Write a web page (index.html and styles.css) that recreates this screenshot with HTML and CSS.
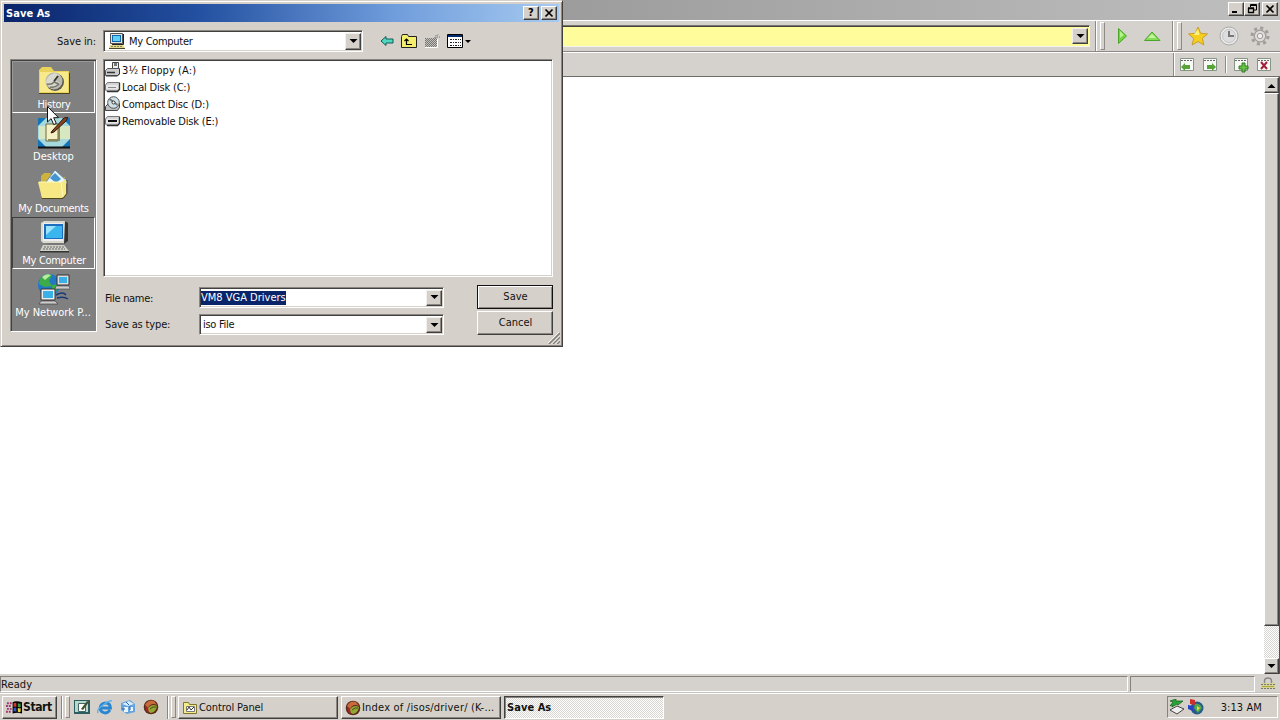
FILE: index.html
```html
<!DOCTYPE html>
<html lang="en">
<head>
  <meta charset="UTF-8">
  <title>Save As</title>
  <link rel="stylesheet" href="styles.css">
</head>
<body>

  <svg class="defs">
    <symbol id="i-pc" viewBox="0 0 32 32">
      <path d="M3 2l3-2h21l2 2v18l-3 2H5l-2-2z" fill="#d8d8cc"/>
      <path d="M27 0l3 2v18l-4 3" fill="#333"/>
      <path d="M5 2h20v18H5z" fill="#eee"/>
      <path d="M6 3h19v15H6z" fill="#1c6fc0"/>
      <path d="M8 5h16v12H8z" fill="#3bb5ee"/>
      <path d="M8 5h10l-10 9z" fill="#9be4fa"/>
      <path d="M9 22h16v3H9z" fill="#777"/>
      <path d="M5 24h21l5 6H2z" fill="#d0d0c8"/>
      <path d="M6 26h20M5 28h22" stroke="#666" stroke-dasharray="2 1"/>
      <path d="M2 30h29v1.500H2z" fill="#333"/>
    </symbol>
    <symbol id="i-pc-small" viewBox="0 0 16 16">
      <path d="M1.500.500h12v10h-12z" fill="#e4e4dc" stroke="#555"/>
      <path d="M14.500 1v10.500H3" fill="none" stroke="#222"/>
      <path d="M3 2h9v7H3z" fill="#1268b0"/>
      <path d="M4 3h7v5H4z" fill="#5fd0f5"/>
      <path d="M1 12h13l2 3H0z" fill="#e2d98c"/>
      <path d="M0 15.500h16" stroke="#4a4628"/>
      <path d="M2 13.500h11" stroke="#8a8450" stroke-dasharray="2 1"/>
    </symbol>
    <symbol id="i-arrow" viewBox="0 0 9 5"><path d="M.5 0h8l-4 4z"/></symbol>
    <symbol id="i-ball" viewBox="0 0 16 16">
      <circle cx="8" cy="8" r="7.300" fill="#5b2a18"/>
      <path d="M2 6q3-6 9-4l3 4q-6-3-9 3z" fill="#c96a3c"/>
      <path d="M5 9q4-5 9-2-1 6-6 7-4-1-3-5z" fill="#93a832"/>
      <path d="M2 7q0 5 4 7l-1-5z" fill="#a8242c"/>
      <path d="M7 10q3-3 6-2" fill="none" stroke="#4c4a1c"/>
    </symbol>
    <symbol id="i-page" viewBox="0 0 16 16">
      <path d="M1.500 1.500h13v12h-13z" fill="#f7f9f4" stroke="#8a9388"/>
      <path d="M2 3.500h12" stroke="#666" stroke-dasharray="2 1"/>
    </symbol>
    <symbol id="i-drive" viewBox="0 0 16 16">
      <path d="M.5 6l2-2.500h12v6.500l-2 2H1.500l-1-1z" fill="#d4d4d4" stroke="#777"/>
      <path d="M1 6h12v4H1z" fill="#e8e8e8"/>
      <path d="M14.500 4v6.500l-2 2H2" fill="none" stroke="#333" stroke-width="1.300"/>
      <path d="M3 8.500h8" stroke="#888"/>
    </symbol>
  </svg>

  <div class="browser">
    <div class="browser-title">
      <span class="cap"><svg viewBox="0 0 12 10"><path d="M2 7h5v2H2z"/></svg></span>
      <span class="cap"><svg viewBox="0 0 12 10"><path d="M4.500 3V.5h6V6H8M4 1.500h7" fill="none" stroke="#000"/><path d="M2.500 4.500h5v4h-5zM2 4h6" fill="none" stroke="#000" stroke-width="1.300"/></svg></span>
      <span class="cap close"><svg viewBox="0 0 12 10"><path d="M2.500 1.500l7 7m0-7l-7 7" stroke="#000" stroke-width="1.700"/></svg></span>
    </div>

    <div class="toolbar">
      <div class="address"><span class="drop"><svg><use href="#i-arrow"/></svg></span></div>
      <div class="group nav">
        <svg viewBox="0 0 20 20"><path d="M6.500 2.500v15l8-7.500z" fill="#6fd63c" stroke="#4aa52a"/><path d="M8 5v7l4-3z" fill="#b9f38e"/></svg>
        <svg viewBox="0 0 20 20"><path d="M2.500 14.500h15.500L10 6z" fill="#86dd58" stroke="#4aa52a"/><path d="M6 12h8l-4-4z" fill="#c4f5a0"/></svg>
      </div>
      <div class="group fav">
        <svg viewBox="0 0 20 20"><path d="M10 1l2.700 6.300 6.800.6-5.200 4.500 1.600 6.600L10 15.500 4.100 19l1.600-6.600L.5 7.900l6.800-.6z" fill="#f5cf1e" stroke="#c99d2c"/><path d="M10 3l1.500 6h-6z" fill="#fdf07c"/></svg>
        <svg viewBox="0 0 20 20"><circle cx="10" cy="10" r="9" fill="#e9e9e9" stroke="#aaa"/><circle cx="10" cy="10" r="6.500" fill="#ddd" stroke="#c4c4c4"/><path d="M10 5v5h5" fill="none" stroke="#777" stroke-width="2"/></svg>
        <svg viewBox="0 0 20 20"><circle cx="10" cy="10" r="8" fill="none" stroke="#a09d9a" stroke-width="3" stroke-dasharray="3 3.280"/><circle cx="10" cy="10" r="5.800" fill="#dedbd8" stroke="#a09d9a" stroke-width="1.300"/><circle cx="10" cy="10" r="2.700" fill="#eee" stroke="#a09d9a"/></svg>
      </div>
    </div>

    <div class="tabbar">
      <div class="tab-tools">
        <svg><use href="#i-page"/><path d="M2 10l4-4v2h5v4H6v2z" fill="#57a33a"/></svg>
        <svg><use href="#i-page"/><path d="M14 10l-4-4v2H5v4h5v2z" fill="#57a33a"/></svg>
        <i></i>
        <svg><use href="#i-page"/><path d="M9 6h3v3h3v3h-3v3H9v-3H6V9h3z" fill="#68c244" stroke="#2f7d20"/></svg>
        <svg><use href="#i-page"/><path d="M5 5l6 7m0-7l-6 7" stroke="#a3203c" stroke-width="2"/></svg>
      </div>
    </div>

    <div class="page">
      <div class="scrollbar">
        <span class="sb-btn"><svg viewBox="0 0 9 5"><path d="M0.500 5h8L4.500 1z"/></svg></span>
        <span class="thumb"></span>
        <span class="track"></span>
        <span class="sb-btn"><svg><use href="#i-arrow"/></svg></span>
      </div>
    </div>

    <div class="status">
      <span class="ready">Ready</span>
      <span class="zone"></span>
      <svg viewBox="0 0 16 16"><path d="M4.500 8V5q0-3 3.500-3t3.500 3v3" fill="none" stroke="#888" stroke-width="1.500"/><path d="M1 7h14v6H1z" fill="#d7d49b"/><path d="M1 8.500h14M1 12.500h14" stroke="#777" stroke-dasharray="2 1"/><path d="M2 10.500h12" stroke="#b1a936"/></svg>
    </div>
  </div>

  <div class="taskbar">
    <div class="start">
      <svg viewBox="0 0 18 16"><path d="M7 3q3-2 10 0v12q-5-2-10 0z"/><path d="M8 4q2-1 3 0v4q-2-1-3 0z" fill="#d8382c"/><path d="M12.500 4q2 1 3 0v4q-1 1-3 0z" fill="#3b9a45"/><path d="M8 9q2-1 3 0v4q-2-1-3 0z" fill="#3456c8"/><path d="M12.500 9q2 1 3 0v4q-1 1-3 0z" fill="#ead53c"/><path d="M1 4h5M0 7h6M1 10h5M0 13h6" stroke="#a3346c" stroke-width="2" stroke-dasharray="2 1"/></svg>
      <b>Start</b>
    </div>
    <div class="quick">
      <svg viewBox="0 0 16 16"><path d="M0 1h16v14H0z" fill="#2b5d61"/><path d="M1 2h13v11H1z" fill="#b8d8cc"/><path d="M4.500 4.500h7v8h-7z" fill="#fff" stroke="#466"/><path d="M7 10l6-8 2 1-6 8z" fill="#44512b"/></svg>
      <svg viewBox="0 0 16 16"><path d="M13 11q-2 3-5 3-5-1-5-5 1-5 6-5 4 0 4.500 5H4" fill="none" stroke="#2a86d2" stroke-width="2.800"/><path d="M1 14q-2-3 5-8t9-4" fill="none" stroke="#5eb1ea" stroke-width="1.500"/></svg>
      <svg viewBox="0 0 16 16"><path d="M1 4l9-3 5 4v8l-8 2-6-4z" fill="#66a2de"/><path d="M2 5l6 2 6-2-5-3z" fill="#d8edff"/><path d="M4 8h4v5H4zM10 8h3v4h-3z" fill="#e9f5ff"/><path d="M6 3l3 3m-7 4h3m5-3v4" stroke="#2467b0"/></svg>
      <svg><use href="#i-ball"/></svg>
    </div>
    <div class="tasks">
      <div class="task">
        <svg viewBox="0 0 16 16"><path d="M1.500 13.500v-11h5l1 2h7v9z" fill="#f7ec8c" stroke="#7f7630"/><path d="M4.500 6.500h8v5h-8z" fill="#fff" stroke="#777"/><path d="M5 10l2-3 2 3 3-3" fill="none" stroke="#333"/></svg>
        <span class="t-control">Control Panel</span>
      </div>
      <div class="task">
        <svg><use href="#i-ball"/></svg>
        <span class="t-index">Index of /isos/driver/ (K-...</span>
      </div>
      <div class="task active"><b>Save As</b></div>
    </div>
    <div class="tray">
      <svg viewBox="0 0 16 16"><path d="M1 11l7-4 7 3-7 5z" fill="#eee" stroke="#444"/><path d="M1 2l6-2v2h7l-5 4-1-1-5 3V6l-2 1 3-4z" fill="#29a336" stroke="#145b1e" stroke-width=".7"/></svg>
      <svg viewBox="0 0 16 16"><circle cx="9" cy="9" r="6.500" fill="#245c8c"/><path d="M7 5q5-1 7 4l-4 5-4-5z" fill="#54a54c"/><path d="M2 0l5 1v5L2 5z" fill="#cc2f2d"/><path d="M0 6l5 1v5l-5-2z" fill="#2742c7"/><path d="M9 7l3 2-3 3z" fill="#e2d74c"/></svg>
      <span class="clock">3:13 AM</span>
    </div>
  </div>

  <div class="dialog">
    <div class="dialog-title">
      <b>Save As</b>
      <span class="cap"><b>?</b></span>
      <span class="cap close"><svg viewBox="0 0 12 10"><path d="M2.500 1.500l7 7m0-7l-7 7" stroke="#000" stroke-width="1.700"/></svg></span>
    </div>

    <div class="lookin">
      <label>Save in:</label>
      <div class="combo">
        <svg class="combo-icon"><use href="#i-pc-small"/></svg>
        <span class="t-mycomp">My Computer</span>
        <span class="drop"><svg><use href="#i-arrow"/></svg></span>
      </div>
      <div class="tools">
        <svg class="back" viewBox="0 0 14 12"><path d="M1 6l5-4.500V4h7v4H6v2.500z" fill="#4fd8c0" stroke="#135a58"/></svg>
        <svg viewBox="0 0 16 14"><path d="M.5 13.500v-11l1-2h5l1 2h8v11z" fill="#f3ee6c" stroke="#222"/><path d="M5.500 5v5.500H11M3.500 7l2-2 2 2" fill="none" stroke="#000" stroke-width="1.200"/></svg>
        <svg viewBox="0 0 16 14"><path d="M1 4h12v9H1z" fill="#c4c0ba"/><path d="M1 4.500h12M1 6.500h12M1 8.500h12M1 10.500h12M1 12.500h12" stroke="#777" stroke-dasharray="1 1"/><path d="M2 5.500h11M2 7.500h11M2 9.500h11M2 11.500h11" stroke="#777" stroke-dasharray="1 1"/><path d="M10 4l5-4m-3-1v5m1-1h3" stroke="#777" stroke-dasharray="1 1"/><path d="M1 13.500h12.500V5" fill="none" stroke="#fff"/></svg>
        <svg class="views" viewBox="0 0 24 14"><path d="M.5.500h15v13H.5z" fill="#fff" stroke="#000"/><path d="M1 2h14" stroke="#002a70" stroke-width="2"/><path d="M3 5.500h11M3 8.500h11M3 11.500h11" stroke="#222" stroke-dasharray="2 1 1 1"/><path d="M18 6h6l-3 3z"/></svg>
      </div>
    </div>

    <div class="dialog-body">
      <div class="places">
        <div class="place hover">
          <svg viewBox="0 0 32 32"><path d="M1 28V5l3-3h9l3 4h15v22z" fill="#e9d35a"/><path d="M2 27V7h28v20z" fill="#f8e98a"/><path d="M1 28.500h30.500V8" fill="none" stroke="#4b4420"/><circle cx="17" cy="17" r="9" fill="#5c5a50"/><circle cx="16" cy="16" r="8.500" fill="#b9b9ae"/><path d="M8 17q1-7 9-9l5 2q-4 1-5 5l5 3q-3 5-7 5-5-1-7-6z" fill="#d9d9d0"/><path d="M9 19q5 1 7-2l4-6M16 17l5 2M12 22q5 1 9-3" fill="none" stroke="#77776c" stroke-width="1.500"/><path d="M16 16l4-5" stroke="#33322c" stroke-width="1.500"/></svg>
          <span>History</span>
        </div>
        <div class="place">
          <svg viewBox="0 0 32 32"><path d="M0 1h32v29H0z" fill="#1275b8"/><path d="M8 1h16l8 8v13l-8 8H8l-8-8V9z" fill="#a5d9de"/><path d="M1 9h31v13H1z" fill="#d7e8c0"/><path d="M8 7h12v17H8z" fill="#f5f0c4" stroke="#6a6844"/><path d="M10 23h11V9" fill="none" stroke="#8a8657" stroke-width="2"/><path d="M14 14L26 1l4-1-2 4-12 11-3 1z" fill="#87421e" stroke="#2f1a10"/><path d="M0 30.500h32" stroke="#111" stroke-width="2"/></svg>
          <span class="t-desk">Desktop</span>
        </div>
        <div class="place">
          <svg viewBox="0 0 32 32"><path d="M3 27V7l3-3h6l3 4h12v19z" fill="#cdb23e"/><path d="M8 13L17 1l13 12-4 7z" fill="#e5f4ff" stroke="#6688a0"/><path d="M12 9l5-5 6 6-5 4z" fill="#4495d0"/><path d="M0 13h24l4-3v15l-4 4H4z" fill="#f8e884"/><path d="M4 29.500h21l4-5V11" fill="none" stroke="#52481c"/><path d="M1 13h22l2 15" fill="none" stroke="#fff8bd"/></svg>
          <span>My Documents</span>
        </div>
        <div class="place selected">
          <svg><use href="#i-pc"/></svg>
          <span>My Computer</span>
        </div>
        <div class="place">
          <svg viewBox="0 0 32 32"><circle cx="11" cy="12" r="11" fill="#2278c4"/><path d="M2 6q5-6 12-4l-3 6 3 5-7 1-6-3zM14 12l7-1-3 8-4 3z" fill="#3cab48"/><path d="M4 4q4-4 9-2L7 7z" fill="#b7ec9a"/><path d="M19 2h12v10H19z" fill="#ddd" stroke="#333"/><path d="M21 4h8v6h-8z" fill="#39b1e8"/><path d="M18 13h13l1 3H17z" fill="#ccc" stroke="#444" stroke-width=".6"/><path d="M3 16h14v11H3z" fill="#eee" stroke="#333"/><path d="M5 18h10v7H5z" fill="#39b1e8"/><path d="M3 28h14l3 3H1z" fill="#ccc" stroke="#333" stroke-width=".6"/><path d="M18 22q7-4 10 0m-9 3q7-2 11 1" fill="none" stroke="#173b78" stroke-width="1.500"/></svg>
          <span class="t-net">My Network P...</span>
        </div>
      </div>

      <div class="main">
        <div class="files">
          <div class="file"><svg viewBox="0 0 16 16"><path d="M7.500.500h6v7h-6z" fill="#eee" stroke="#444"/><path d="M9 1h3v3H9z" fill="#777"/><path d="M.5 8.500l2-2h12v5l-2 2H.5z" fill="#ccc" stroke="#555"/><path d="M14.500 7v5l-2 2H1" fill="none" stroke="#333"/><path d="M2 10.500h8" stroke="#333" stroke-width="1.500"/></svg><span class="t-a">3½ Floppy (A:)</span></div>
          <div class="file"><svg><use href="#i-drive"/></svg><span>Local Disk (C:)</span></div>
          <div class="file"><svg viewBox="0 0 16 16"><path d="M.5 10.500l3-3h11v4l-2 3H.5z" fill="#bbb" stroke="#444"/><circle cx="8.500" cy="6.500" r="5.800" fill="#d3e0e4" stroke="#50595c"/><path d="M8.500 6l-4-3m4 3l4 3" stroke="#6b7b80" stroke-width="2"/><circle cx="8.500" cy="6.500" r="1.500" fill="#fff" stroke="#333"/></svg><span>Compact Disc (D:)</span></div>
          <div class="file"><svg><use href="#i-drive"/><path d="M3 8h9" stroke="#111" stroke-width="2"/></svg><span>Removable Disk (E:)</span></div>
        </div>

        <div class="form">
          <label>File name:</label>
          <div class="combo"><span class="picked">VM8 VGA Drivers</span><span class="drop"><svg><use href="#i-arrow"/></svg></span></div>
          <div class="btn default">Save</div>
          <label class="t-type">Save as type:</label>
          <div class="combo type"><span class="t-iso">iso File</span><span class="drop"><svg><use href="#i-arrow"/></svg></span></div>
          <div class="btn">Cancel</div>
        </div>
      </div>
    </div>
    <svg class="grip" viewBox="0 0 12 12"><path d="M1 12L12 1M5 12l7-7M9 12l3-3" stroke="#85817b" stroke-width="1.600"/><path d="M0 11L11 0M3.500 12L12 3.500M7.500 12L12 7.500" stroke="#fff" stroke-width=".8"/></svg>
  </div>

  <svg class="cursor" viewBox="0 0 12 20"><path d="M.5.500v15.500l3.600-3.400 2.600 6 2.600-1.100-2.600-5.800h4.800z" fill="#fff" stroke="#111"/></svg>

</body>
</html>
```

FILE: styles.css
```css
* {
  box-sizing: border-box;
}

body {
  margin: 0;
  width: 1280px;
  height: 720px;
  overflow: hidden;
  display: flex;
  flex-direction: column;
  background: #fff;
  color: #111;
  font: 11px/14px "DejaVu Sans Condensed", "DejaVu Sans", sans-serif;
  font-stretch: condensed;
  letter-spacing: -0.3px;
  white-space: nowrap;
}

b {
  font-family: "DejaVu Sans Condensed", "DejaVu Sans", sans-serif;
  letter-spacing: 0.05px;
}

svg {
  display: block;
  width: 16px;
  height: 16px;
  flex: none;
}

.defs {
  display: none;
}

/* browser window */
.browser {
  height: 693px;
  display: flex;
  flex-direction: column;
}

.browser-title {
  height: 20px;
  padding: 2px 2px 0 0;
  display: flex;
  justify-content: flex-end;
  background: linear-gradient(90deg, #808080, #9c9c9c 44%, #bfbfbf);
}

.cap {
  width: 16px;
  height: 14px;
  display: flex;
  align-items: center;
  justify-content: center;
  background: #d5d1ca;
  border: 1px solid;
  border-color: #fff #404040 #404040 #fff;
  box-shadow: inset -1px -1px #8b8780;
  color: #000;
}

.cap svg {
  width: 12px;
  height: 10px;
}

.close {
  margin-left: 2px;
}

.toolbar {
  height: 32px;
  display: flex;
  background: #d5d1cc;
  border-top: 1px solid #fff;
  border-bottom: 1px solid #8d8a86;
}

.address {
  width: 1090px;
  height: 22px;
  margin-top: 4px;
  padding: 2px 1px 2px 2px;
  display: flex;
  justify-content: flex-end;
  background: #fffd9b;
  border: 1px solid;
  border-color: #77746f #f5f3f0 #f5f3f0 #77746f;
  box-shadow: inset 0 1px #44423d;
}

.drop {
  width: 16px;
  margin-left: auto;
  flex: none;
  align-self: stretch;
  display: flex;
  align-items: center;
  justify-content: center;
  background: #d5d1ca;
  border: 1px solid;
  border-color: #f2f0ec #404040 #404040 #f2f0ec;
  box-shadow: inset -1px -1px #8b8780;
}

.drop svg,
.sb-btn svg {
  width: 9px;
  height: 5px;
}

.group {
  display: flex;
  align-items: center;
  border-left: 1px solid #fff;
  box-shadow: -1px 0 #8d8a86;
}

.group::before {
  content: "";
  width: 3px;
  height: 26px;
  margin-left: 3px;
  border: 1px solid;
  border-color: #fff #8d8a86 #8d8a86 #fff;
}

.group svg {
  width: 20px;
  height: 20px;
}

.nav {
  width: 77px;
  margin-left: 6px;
}

.nav svg {
  margin-left: 10px;
}

.nav svg:first-child {
  margin-left: 7px;
}

.fav {
  flex: 1;
}

.fav svg {
  margin-left: 9px;
  margin-right: 2px;
}

.fav svg:first-child {
  margin-left: 6px;
}

.tabbar {
  height: 25px;
  display: flex;
  justify-content: flex-end;
  background: #d5d1cc;
  border-top: 1px solid #fff;
  border-bottom: 1px solid #706d69;
}

.tab-tools {
  width: 106px;
  display: flex;
  align-items: center;
  border-left: 1px solid #fff;
  box-shadow: -1px 0 #8d8a86;
  padding-left: 4px;
  gap: 7px;
}

.tab-tools i {
  width: 2px;
  height: 17px;
  margin: 0 -1px 0 0;
  border-left: 1px solid #8d8a86;
  border-right: 1px solid #fff;
}

.page {
  flex: 1;
  display: flex;
  justify-content: flex-end;
}

.scrollbar {
  width: 16px;
  display: flex;
  flex-direction: column;
  border-right: 1px solid #55524e;
}

.sb-btn {
  height: 16px;
  display: flex;
  align-items: center;
  justify-content: center;
}

.sb-btn,
.thumb {
  background: #d5d1cc;
  border: 1px solid;
  border-color: #fff #404040 #404040 #fff;
  box-shadow: inset -1px -1px #8b8780;
}

.thumb {
  height: 533px;
}

.track {
  flex: 1;
}

.track,
.active {
  background: repeating-conic-gradient(#fff 0 25%, #d8d5d0 0 50%) 0 0 / 2px 2px;
}

.status {
  height: 19px;
  display: flex;
  align-items: stretch;
  background: #d5d1cc;
  padding-top: 2px;
  border-bottom: 1px solid #c5c1bc;
}

.ready {
  width: 1128px;
  padding: 1px 0 0 0;
  border: 1px solid;
  border-color: #85827d #fff #fff #85827d;
  letter-spacing: 0.1px;
}

.zone {
  width: 125px;
  margin-left: 2px;
  border: 1px solid;
  border-color: #85827d #fff #fff #85827d;
}

.status svg {
  margin-left: 5px;
}

/* taskbar */
.taskbar {
  height: 27px;
  display: flex;
  align-items: center;
  padding: 0 2px 0 2px;
  background: #d5d1ca;
  border-top: 1px solid #fff;
}

.start,
.task {
  height: 23px;
  display: flex;
  align-items: center;
  border: 1px solid;
  border-color: #fff #404040 #404040 #fff;
  box-shadow: inset -1px -1px #8b8780;
}

.start {
  width: 55px;
  padding-left: 3px;
}

.start b {
  font-size: 12px;
  letter-spacing: -0.4px;
}

.start svg {
  width: 17px;
}

.quick,
.tasks {
  height: 23px;
  display: flex;
  align-items: center;
  border-left: 1px solid #8b8780;
  box-shadow: inset 1px 0 #fff;
}

.quick::before,
.tasks::before {
  content: "";
  width: 3px;
  height: 20px;
  border: 1px solid;
  border-color: #fff #8b8780 #8b8780 #fff;
}

.quick {
  width: 106px;
  margin-left: 4px;
  gap: 7px;
}

.quick::before {
  margin: 0 -3px 0 3px;
}

.tasks {
  gap: 3px;
}

.tasks::before {
  margin: 0 -1px 0 3px;
}

.task {
  width: 160px;
  padding: 1px 0 0 3px;
  gap: 1px;
}

.t-control {
  letter-spacing: -0.1px;
}

.t-index {
  letter-spacing: 0.2px;
}

.active {
  padding: 2px 0 0 2px;
  border-color: #404040 #fff #fff #404040;
  box-shadow: inset 1px 1px #8b8780;
}

.tray {
  width: 111px;
  height: 22px;
  margin-left: auto;
  padding: 0 15px 0 1px;
  display: flex;
  align-items: center;
  gap: 3px;
  border: 1px solid;
  border-color: #85827d #fff #fff #85827d;
}

.clock {
  margin-left: auto;
  padding-top: 2px;
  letter-spacing: 0.1px;
}

/* dialog */
.dialog {
  position: absolute;
  left: 0;
  top: 0;
  width: 563px;
  height: 347px;
  padding: 3px;
  background: #d5d1ca;
  border: 1px solid;
  border-color: #d5d1ca #404040 #404040 #d5d1ca;
  box-shadow: inset 1px 1px #fff, inset -1px -1px #8b8780;
}

.dialog-title {
  height: 18px;
  padding: 0 2px;
  display: flex;
  align-items: center;
  color: #fff;
  background: linear-gradient(90deg, #0a246a, #2350a0 35%, #6f9cdb 70%, #a6caf0);
}

.dialog-title > b {
  padding-top: 1px;
}

.dialog-title .cap:first-of-type {
  margin-left: auto;
}

.lookin {
  height: 37px;
  display: flex;
  align-items: center;
}

.lookin label {
  width: 99px;
  padding: 2px 7px 0 0;
  text-align: right;
  letter-spacing: -0.1px;
}

.combo {
  height: 21px;
  padding: 2px 1px 1px 1px;
  display: flex;
  align-items: center;
  background: #fff;
  border: 1px solid;
  border-color: #8b8780 #fff #fff #8b8780;
  box-shadow: inset 1px 1px #404040, inset -1px -1px #d5d1ca;
}

.lookin .combo {
  width: 260px;
  height: 22px;
}

.t-mycomp {
  padding-top: 1px;
}

.combo-icon {
  margin: 0 4px;
}

.tools {
  display: flex;
  align-items: center;
  margin-left: 17px;
  gap: 7px;
}

.tools svg {
  height: 14px;
}

.tools .back {
  width: 14px;
  height: 12px;
}

.tools .views {
  width: 24px;
}

.dialog-body {
  display: flex;
  gap: 6px;
  padding-left: 6px;
}

.places {
  width: 87px;
  height: 273px;
  background: #808080;
  border: 1px solid;
  border-color: #8b8780 #fff #fff #8b8780;
  box-shadow: inset 1px 1px #404040;
  padding: 1px;
}

.place {
  height: 52px;
  padding-top: 3px;
  display: flex;
  flex-direction: column;
  align-items: center;
  color: #fff;
  border: 1px solid transparent;
}

.place svg {
  width: 32px;
  height: 32px;
}

.place span {
  margin-top: 1px;
}

.place .t-desk {
  letter-spacing: 0;
}

.place .t-net {
  letter-spacing: 0;
  padding-right: 1px;
}

.hover {
  border-color: #999 #fff #fff #999;
}

.hover span {
  padding-left: 1px;
}

.selected {
  border-color: #404040 #fff #fff #404040;
}

.selected span {
  padding-left: 1px;
}

.main {
  width: 450px;
}

.files {
  height: 218px;
  padding: 1px;
  background: #fff;
  border: 1px solid;
  border-color: #8b8780 #fff #fff #8b8780;
  box-shadow: inset 1px 1px #404040, inset -1px -1px #d5d1ca;
}

.file {
  height: 17px;
  display: flex;
  align-items: center;
  gap: 1px;
  letter-spacing: -0.2px;
}

.file span {
  padding-top: 3px;
}

.file .t-a {
  letter-spacing: 0.1px;
}

.form {
  display: grid;
  grid-template-columns: 96px 245px 76px;
  row-gap: 2px;
  margin-top: 8px;
  align-items: center;
}

.form label {
  padding: 3px 0 0 2px;
}

.form .type {
  align-self: end;
}

.t-type {
  letter-spacing: -0.15px;
}

.picked {
  background: #0a246a;
  color: #fff;
  letter-spacing: 0;
}

.t-iso {
  margin-left: 2px;
}

.btn {
  width: 76px;
  height: 24px;
  margin-left: 33px;
  padding-left: 1px;
  display: flex;
  align-items: center;
  justify-content: center;
  border: 1px solid;
  border-color: #fff #404040 #404040 #fff;
  box-shadow: inset -1px -1px #8b8780;
  letter-spacing: 0;
}

.default {
  border-color: #111;
  box-shadow: inset 1px 1px #fff, inset -1px -1px #8b8780;
}

.grip {
  position: absolute;
  right: 2px;
  bottom: 2px;
  width: 12px;
  height: 12px;
}

.cursor {
  position: absolute;
  left: 47px;
  top: 106px;
  width: 12px;
  height: 20px;
}
```
